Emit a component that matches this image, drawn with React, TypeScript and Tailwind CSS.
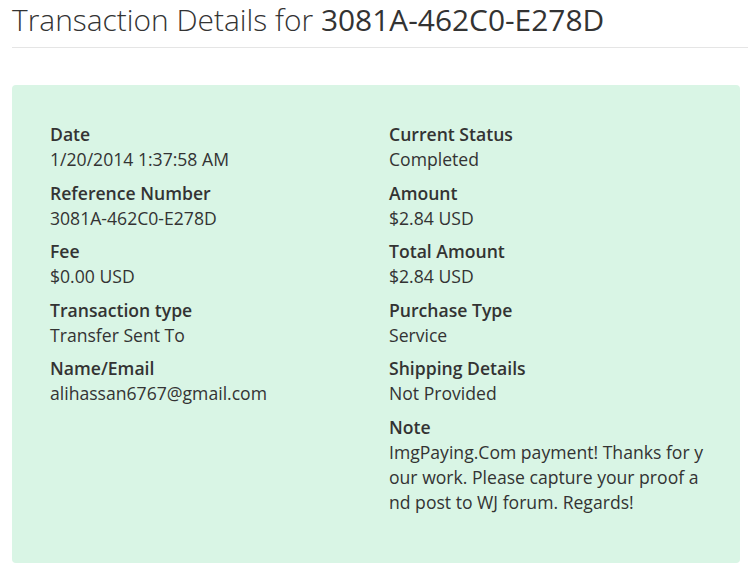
import React from 'react';

type Field = {
  label: string;
  value: string;
};

const leftFields: Field[] = [
  { label: 'Date', value: '1/20/2014 1:37:58 AM' },
  { label: 'Reference Number', value: '3081A-462C0-E278D' },
  { label: 'Fee', value: '$0.00 USD' },
  { label: 'Transaction type', value: 'Transfer Sent To' },
  { label: 'Name/Email', value: 'alihassan6767@gmail.com' },
];

const rightFields: Field[] = [
  { label: 'Current Status', value: 'Completed' },
  { label: 'Amount', value: '$2.84 USD' },
  { label: 'Total Amount', value: '$2.84 USD' },
  { label: 'Purchase Type', value: 'Service' },
  { label: 'Shipping Details', value: 'Not Provided' },
  {
    label: 'Note',
    value: 'ImgPaying.Com payment! Thanks for your work. Please capture your proof and post to WJ forum. Regards!',
  },
];

const FieldBlock: React.FC<{ field: Field }> = ({ field }) => (
  <div className="mb-[8.5px]">
    <div className="font-semibold">{field.label}</div>
    <div className="break-all">{field.value}</div>
  </div>
);

const App: React.FC = () => {
  return (
    <div
      className="min-h-screen bg-white text-[#333333] pl-3"
      style={{ fontFamily: '"Open Sans", "Liberation Sans", sans-serif' }}
    >
      <h1 className="text-[29.9px] leading-[38px] font-light pt-[1px] pb-[8px] border-b border-[#e5e5e5]">
        Transaction Details for <span className="font-normal">3081A-462C0-E278D</span>
      </h1>

      <div className="mt-[37px] w-[728px] rounded bg-[#d9f5e5] pl-[38px] pt-[37px] pb-[40px] text-[17.6px] leading-[25px]">
        <div className="flex">
          <div className="w-[339px]">
            {leftFields.map((f) => (
              <FieldBlock key={f.label} field={f} />
            ))}
          </div>
          <div className="w-[318px]">
            {rightFields.map((f) => (
              <FieldBlock key={f.label} field={f} />
            ))}
          </div>
        </div>
      </div>
    </div>
  );
};

export default App;
